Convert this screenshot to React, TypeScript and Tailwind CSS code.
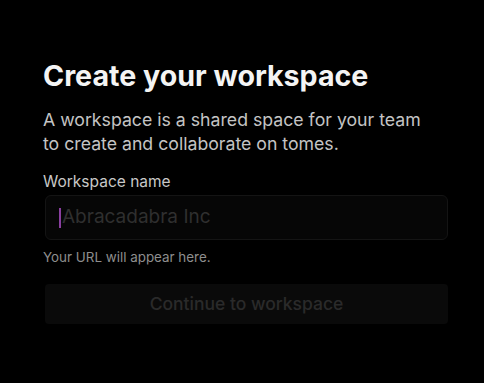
import React from 'react';

export default function App() {
  return (
    <div
      className="w-[484px] h-[383px] bg-black overflow-hidden"
      style={{fontFamily: 'Inter, "Noto Sans", sans-serif'}}
    >
      <div className="pt-[59px] pl-[43px] pr-[36px]">
        <h1 className="text-[28.6px] leading-[34px] font-bold text-[#f4f4f4]">
          Create your workspace
        </h1>
        <p className="mt-[15px] text-[17.7px] leading-[24px] text-[#c4c4c4]">
          A workspace is a shared space for your team
          <br />
          to create and collaborate on tomes.
        </p>
        <label className="block mt-[17px] text-[15.5px] leading-[18px] text-[#c8c8c8]">
          Workspace name
        </label>
        <div className="mt-[4px] ml-[2px] h-[45px] rounded-[6px] border border-[#141414] bg-[#060606] flex items-center pl-[13px]">
          <span className="w-[2px] h-[20px] bg-[#8a3fa0] mr-[1px]" />
          <span className="text-[19px] text-[#2f2f2f]">Abracadabra Inc</span>
        </div>
        <p className="mt-[9px] text-[13.4px] leading-[16px] text-[#8e8e8e]">
          Your URL will appear here.
        </p>
        <button
          type="button"
          className="mt-[19px] ml-[2px] w-[403px] h-[40px] rounded-[4px] bg-[#0a0a0a] text-[17.5px] font-medium text-[#2a2a2a]"
        >
          Continue to workspace
        </button>
      </div>
    </div>
  );
}
